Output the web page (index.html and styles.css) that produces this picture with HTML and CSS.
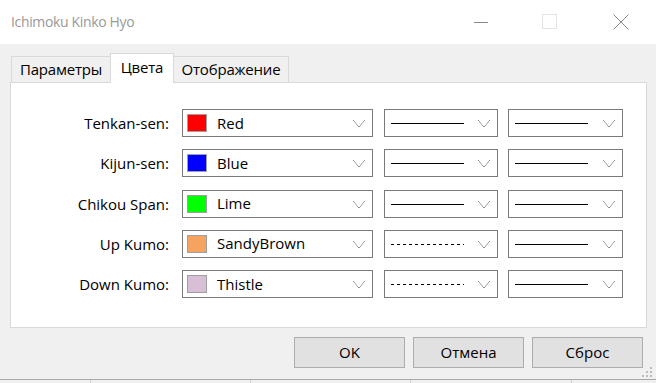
FILE: index.html
```html
<!DOCTYPE html>
<html>
<head>
<meta charset="utf-8">
<link rel="stylesheet" href="styles.css">
</head>
<body>
<div class="window">
  <div class="titlebar">
    <div class="title">Ichimoku Kinko Hyo</div>
    <div class="controls">
      <svg class="ctl" width="16" height="16" viewBox="0 0 16 16"><path d="M1 8.5H15" stroke="#8a8a8a" stroke-width="1"/></svg>
      <svg class="ctl" width="16" height="16" viewBox="0 0 16 16"><rect x="0.5" y="0.5" width="14" height="14" fill="none" stroke="#e3e3e3"/></svg>
      <svg class="ctl" width="16" height="16" viewBox="0 0 16 16"><path d="M0.5 0.5L15.5 15.5M15.5 0.5L0.5 15.5" stroke="#8a8a8a" stroke-width="1"/></svg>
    </div>
  </div>
  <div class="client">
    <div class="tabs">
      <div class="tab t1">Параметры</div>
      <div class="tab active">Цвета</div>
      <div class="tab t3">Отображение</div>
    </div>
    <div class="panel">
      <div class="grid">
        <div class="label">Tenkan-sen:</div>
        <div class="combo color"><span class="swatch" style="background:#ff0000"></span><span class="name">Red</span><span class="chev"></span></div>
        <div class="combo style"><span class="line solid"></span><span class="chev"></span></div>
        <div class="combo style"><span class="line solid"></span><span class="chev"></span></div>

        <div class="label">Kijun-sen:</div>
        <div class="combo color"><span class="swatch" style="background:#0000ff"></span><span class="name">Blue</span><span class="chev"></span></div>
        <div class="combo style"><span class="line solid"></span><span class="chev"></span></div>
        <div class="combo style"><span class="line solid"></span><span class="chev"></span></div>

        <div class="label">Chikou Span:</div>
        <div class="combo color"><span class="swatch" style="background:#00ff00"></span><span class="name">Lime</span><span class="chev"></span></div>
        <div class="combo style"><span class="line solid"></span><span class="chev"></span></div>
        <div class="combo style"><span class="line solid"></span><span class="chev"></span></div>

        <div class="label">Up Kumo:</div>
        <div class="combo color"><span class="swatch" style="background:#f4a460"></span><span class="name">SandyBrown</span><span class="chev"></span></div>
        <div class="combo style"><span class="line dashed"></span><span class="chev"></span></div>
        <div class="combo style"><span class="line solid"></span><span class="chev"></span></div>

        <div class="label">Down Kumo:</div>
        <div class="combo color"><span class="swatch" style="background:#d8bfd8"></span><span class="name">Thistle</span><span class="chev"></span></div>
        <div class="combo style"><span class="line dashed"></span><span class="chev"></span></div>
        <div class="combo style"><span class="line solid"></span><span class="chev"></span></div>
      </div>
    </div>
    <div class="buttons">
      <div class="btn">OK</div>
      <div class="btn">Отмена</div>
      <div class="btn">Сброс</div>
    </div>
    <svg class="grip" width="10" height="10" viewBox="0 0 10 10">
      <rect x="8" y="0" width="2" height="2" fill="#bcbcbc"/>
      <rect x="4" y="4" width="2" height="2" fill="#bcbcbc"/>
      <rect x="8" y="4" width="2" height="2" fill="#bcbcbc"/>
      <rect x="0" y="8" width="2" height="2" fill="#bcbcbc"/>
      <rect x="4" y="8" width="2" height="2" fill="#bcbcbc"/>
      <rect x="8" y="8" width="2" height="2" fill="#bcbcbc"/>
    </svg>
  </div>
  <div class="status">
    <div class="cell c1"></div>
    <div class="cell c2"></div>
    <div class="cell c3"></div>
    <div class="cell c4"></div>
    <div class="cell c5"></div>
  </div>
</div>
</body>
</html>
```

FILE: styles.css
```css
html, body {
  margin: 0;
  padding: 0;
  background: #f0f0f0;
}
body {
  width: 656px;
  height: 383px;
  overflow: hidden;
  font-family: "Open Sans", "Noto Sans", "Liberation Sans", sans-serif;
  font-size: 15px;
  color: #000;
}
.window {
  width: 656px;
  height: 383px;
  display: flex;
  flex-direction: column;
}
.titlebar {
  height: 44px;
  background: #fff;
  display: flex;
  align-items: center;
  justify-content: space-between;
  flex-shrink: 0;
}
.title {
  margin-left: 11px;
  color: #999;
  font-size: 14px;
  letter-spacing: -0.35px;
  margin-top: -1px;
}
.controls {
  display: flex;
  align-items: center;
  margin-right: 27px;
  margin-top: -1px;
}
.ctl {
  display: block;
}
.controls .ctl:nth-child(1) { margin-right: 53px; }
.controls .ctl:nth-child(2) { margin-right: 55px; }

.client {
  position: relative;
  flex: 1;
  display: flex;
  flex-direction: column;
  padding: 10px 9px 0 10px;
}
.tabs {
  display: flex;
  align-items: flex-end;
  height: 29px;
  margin-left: 1px;
  position: relative;
  z-index: 1;
}
.tab {
  height: 26px;
  box-sizing: border-box;
  border: 1px solid #d9d9d9;
  border-bottom: none;
  background: #f0f0f0;
  line-height: 25px;
  margin-bottom: 1px;
  text-align: center;
  letter-spacing: -0.2px;
}
.t1 { width: 100px; }
.t3 { width: 115px; border-left: none; }
.tab.active {
  background: #fff;
  width: 64px;
  height: 30px;
  margin-bottom: 0;
  line-height: 26px;
  margin-left: -1px;
}
.panel {
  height: 246px;
  box-sizing: border-box;
  background: #fff;
  border: 1px solid #d9d9d9;
  margin-top: -1px;
  padding-top: 26px;
}
.grid {
  display: grid;
  grid-template-columns: 159px 191px 113px 113px;
  column-gap: 12px;
  row-gap: 12.25px;
  align-items: center;
}
.grid .combo.style { margin-left: -1px; }
.grid .combo.style + .combo.style { margin-left: -2px; }
.label {
  text-align: right;
  white-space: nowrap;
  padding-right: 1px;
}
.combo {
  height: 28px;
  box-sizing: border-box;
  border: 1px solid #7a7a7a;
  display: flex;
  align-items: center;
  padding: 0 7px 0 4px;
}
.swatch {
  width: 20px;
  height: 18px;
  box-sizing: border-box;
  border: 1px solid #a0a0a0;
  flex-shrink: 0;
}
.name {
  margin-left: 10px;
  flex: 1;
  margin-top: -1px;
}
.combo.style {
  padding-left: 6px;
}
.line {
  width: 73px;
  height: 0;
  border-top: 1px solid #000;
  margin-right: auto;
  margin-top: 1px;
}
.line.dashed {
  border-top: none;
  height: 1px;
  background: repeating-linear-gradient(to right, #000 0 3px, transparent 3px 6px);
}
.chev {
  width: 12px;
  height: 7px;
  flex-shrink: 0;
  background:
    linear-gradient(to top right, transparent calc(50% - 0.6px), #808080 50%, transparent calc(50% + 0.6px)) left / 6px 7px no-repeat,
    linear-gradient(to top left, transparent calc(50% - 0.6px), #808080 50%, transparent calc(50% + 0.6px)) right / 6px 7px no-repeat;
  margin-top: 1px;
}
.buttons {
  display: flex;
  justify-content: flex-end;
  gap: 8px;
  margin-top: 9px;
  margin-right: 4px;
}
.btn {
  width: 111px;
  height: 31px;
  box-sizing: border-box;
  border: 1px solid #adadad;
  background: #e1e1e1;
  display: flex;
  align-items: center;
  justify-content: center;
  padding-bottom: 1px;
}
.grip {
  position: absolute;
  right: 4px;
  bottom: 2px;
}
.status {
  height: 3px;
  flex-shrink: 0;
  border-top: 1px solid #a8a8a8;
  display: flex;
  background: #f0f0f0;
}
.cell {
  height: 3px;
  border-right: 1px solid #d0d0d0;
}
.c1 { width: 90px; }
.c2 { width: 159px; }
.c3 { width: 159px; }
.c4 { width: 160px; }
.c5 { flex: 1; border-right: none; }
```
